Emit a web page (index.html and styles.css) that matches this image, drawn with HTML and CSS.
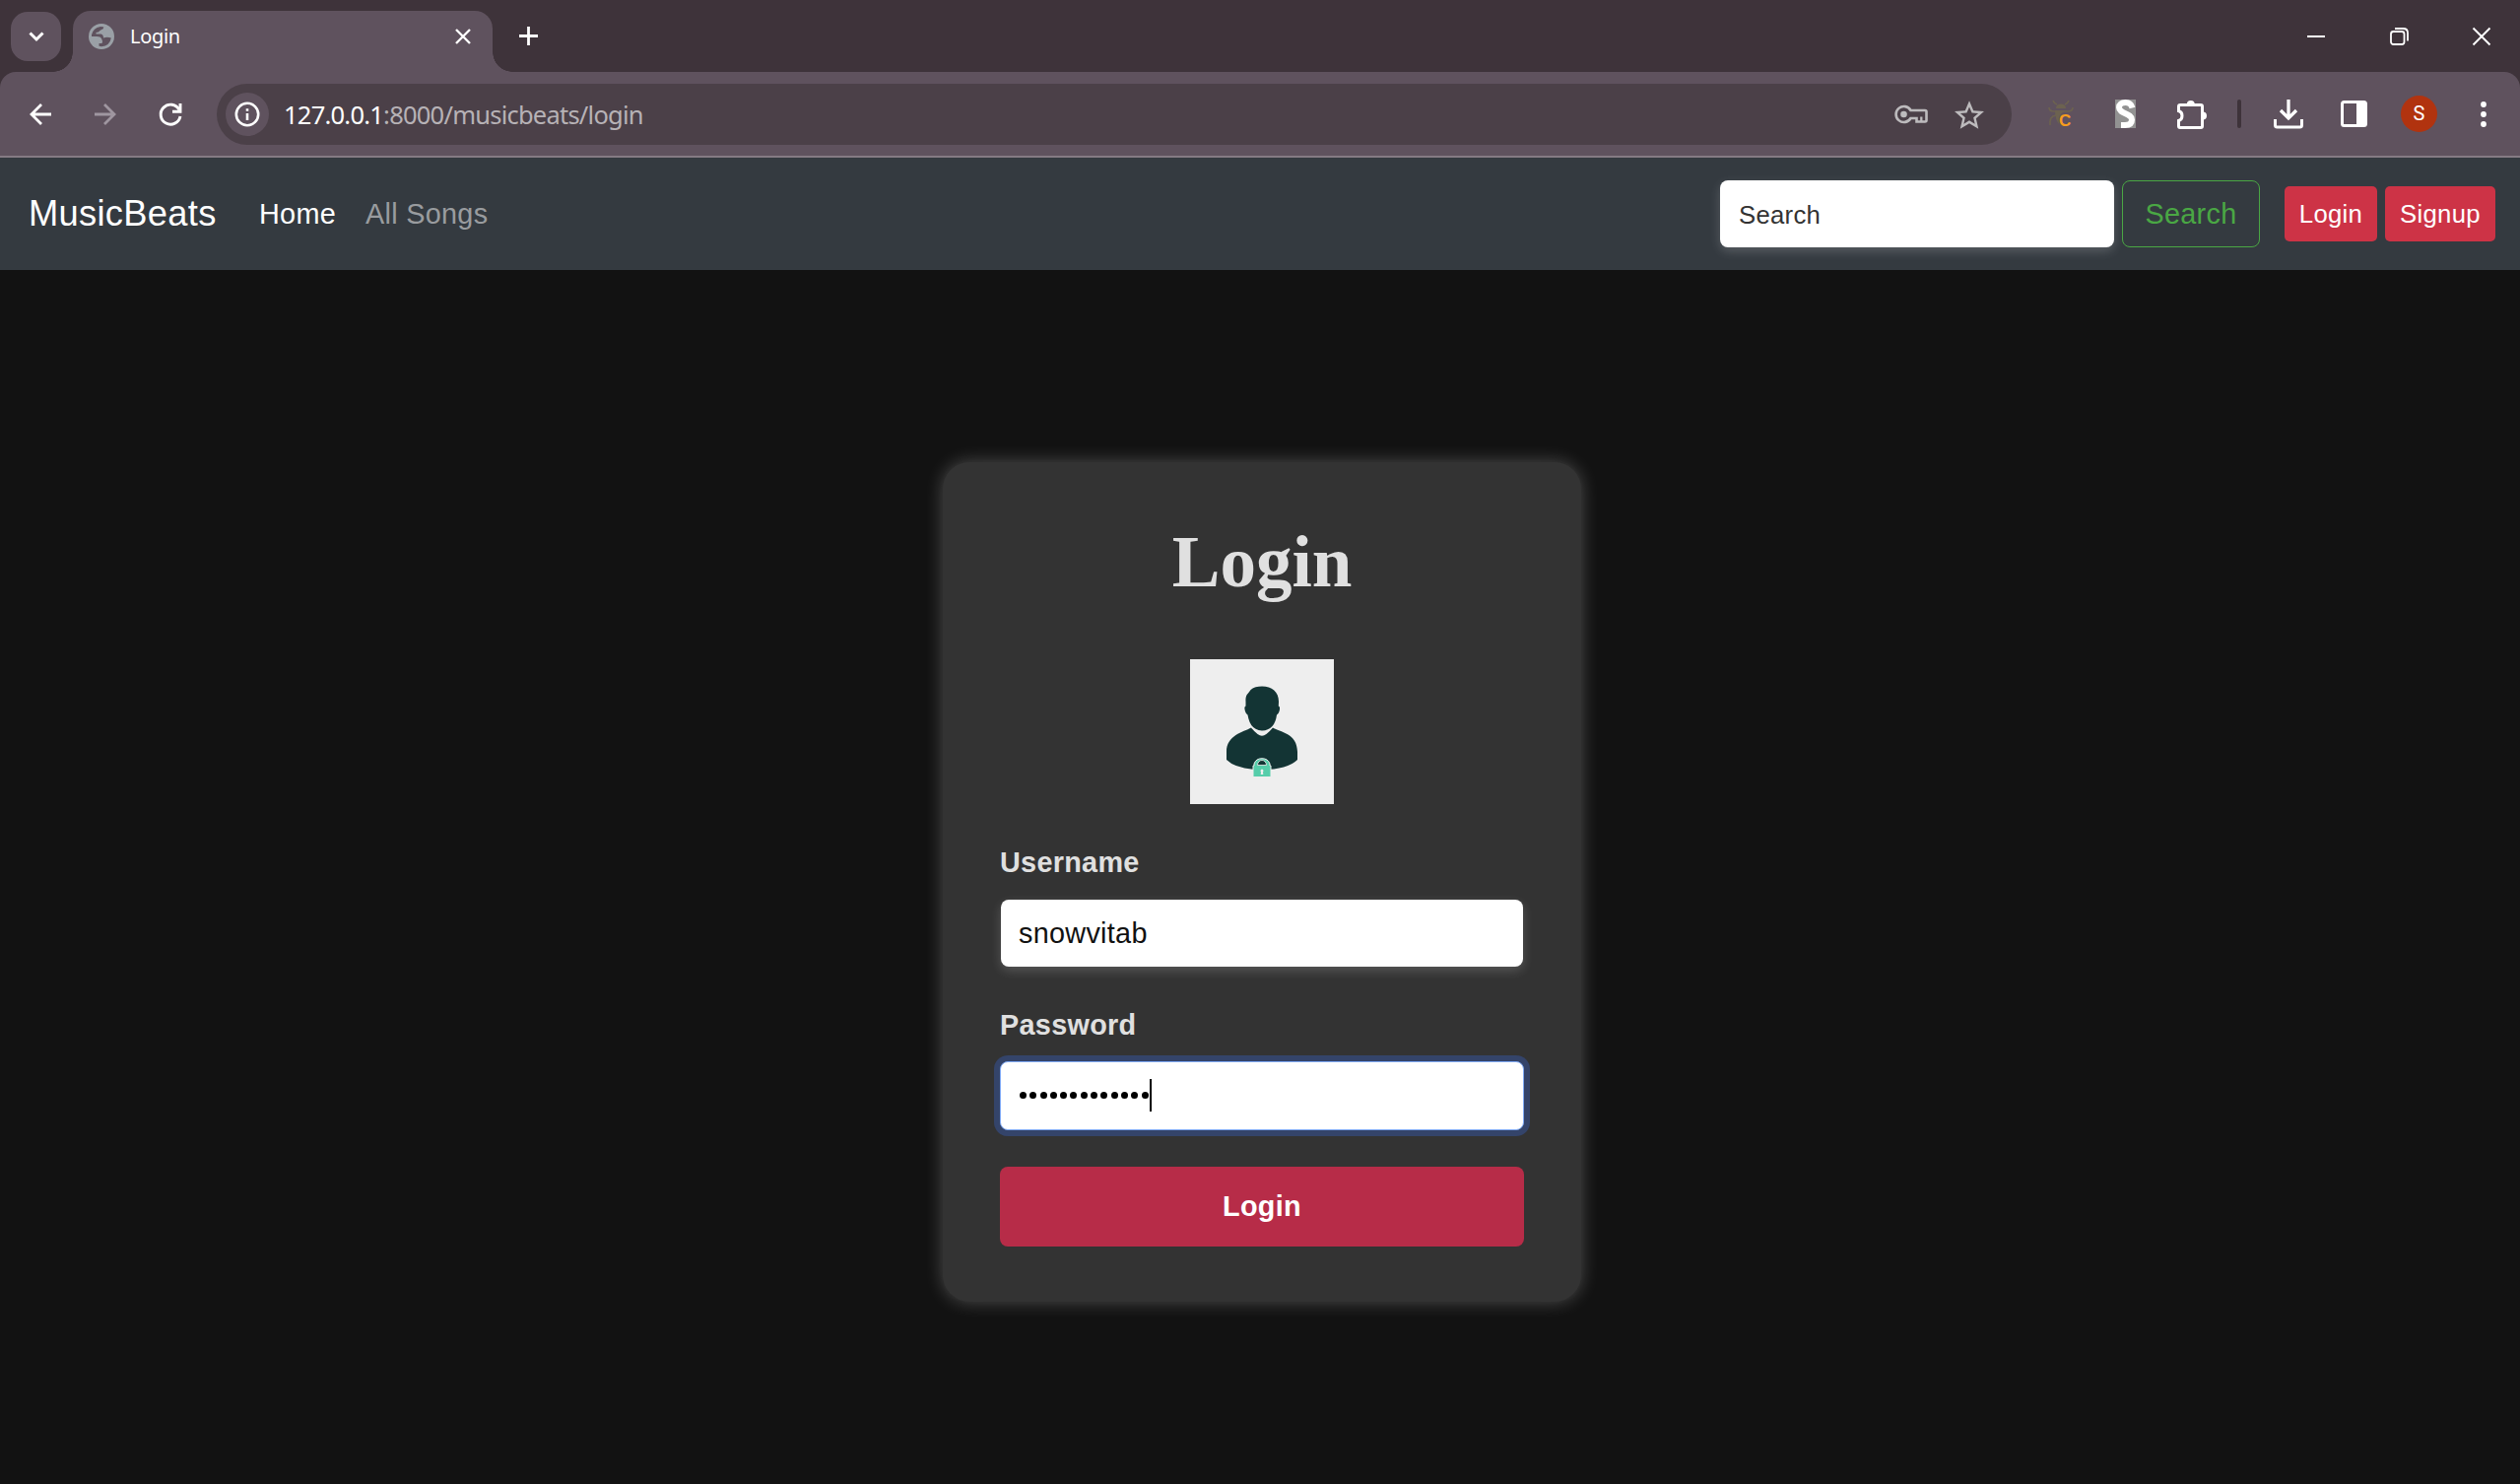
FILE: index.html
```
<!DOCTYPE html>
<html lang="en">
<head>
<meta charset="utf-8">
<title>Login</title>
<link rel="stylesheet" href="styles.css">
</head>
<body>
<div class="chrome">
<header class="titlebar">
  <button class="tab-search" aria-label="Search tabs"><svg width="16" height="11" viewBox="0 0 16 11"><path d="M1.5 1.5 8 8 14.5 1.5" fill="none" stroke="#fff" stroke-width="3"/></svg></button>
  <div class="tab">
    <svg class="globe" width="26" height="26" viewBox="0 0 26 26"><circle cx="13" cy="13" r="13" fill="#9aa0a6"/><path d="M3 11.200Q4.500 4.500 12 3L16.500 3.500Q14.500 4 14.500 6.500Q12.500 6 11.500 7Q10.500 9 7.500 9V10.500H12.500Q15 11 15 14.500Q19 13 22.800 14.500Q21.500 22.500 13 23.300L10.500 22.800V20H13.500Q14.500 17.500 13 15Q12 13 8.500 13H3Z" fill="#5f525e"/><path d="M15 3Q21.500 4 23 11.500Q22 13.500 19 13.200Q16 12.500 15.500 10Q12 8.500 13 6Q15.500 6 15 3Z" fill="#9aa0a6"/></svg>
    <span class="tab-title">Login</span>
    <svg class="tab-close" width="16" height="16" viewBox="0 0 16 16"><path d="M1 1 15 15M15 1 1 15" stroke="#fff" stroke-width="2.400"/></svg>
  </div>
  <svg class="new-tab" width="19" height="19" viewBox="0 0 19 19"><path d="M9.500 0V19M0 9.500H19" stroke="#fff" stroke-width="2.800"/></svg>
  <div class="window-controls">
    <svg width="18" height="18" viewBox="0 0 18 18"><path d="M0 9H18" stroke="#fff" stroke-width="2"/></svg>
    <svg width="19" height="18" viewBox="0 0 19 18"><rect x="1" y="4" width="13.500" height="13" rx="2.500" fill="none" stroke="#fff" stroke-width="1.800"/><path d="M5 1H13.500Q18 1 18 5.500V13.500" fill="none" stroke="#fff" stroke-width="1.800"/></svg>
    <svg width="18" height="18" viewBox="0 0 18 18"><path d="M.5.5 17.500 17.500M17.500.5.5 17.500" stroke="#fff" stroke-width="1.900"/></svg>
  </div>
</header>
<div class="toolbar">
  <div class="nav-icons">
    <svg width="22" height="22" viewBox="0 0 22 22"><path d="M22 11H2M12 1 2 11 12 21" fill="none" stroke="#fff" stroke-width="2.800"/></svg>
    <svg width="22" height="22" viewBox="0 0 22 22"><path d="M0 11H20M10 1 20 11 10 21" fill="none" stroke="#9f96a0" stroke-width="2.800"/></svg>
    <svg width="24" height="24" viewBox="0 0 24 24"><path d="M21 7.500A10 10 0 1 0 22 14" fill="none" stroke="#fff" stroke-width="2.900"/><path d="M22 1V9.200H14" fill="none" stroke="#fff" stroke-width="2.900"/></svg>
  </div>
  <div class="omnibox">
    <span class="site-info"><svg width="26" height="26" viewBox="0 0 26 26"><circle cx="13" cy="13" r="11.200" fill="none" stroke="#fff" stroke-width="2.600"/><path d="M13 12V19M13 7.200V9.800" stroke="#fff" stroke-width="2.600"/></svg></span>
    <span class="url"><b>127.0.0.1</b>:8000/musicbeats/login</span>
    <span class="omni-icons">
      <svg width="34" height="20" viewBox="0 0 34 20"><path d="M16.500 6A8 8 0 1 0 16.500 14H22.500V17.500H31Q32.500 17.500 32.500 16V7.500Q32.500 6 31 6Z" fill="none" stroke="#bdbbbd" stroke-width="2.600"/><circle cx="9.500" cy="10" r="3.300" fill="#bdbbbd"/><path d="M27.300 12.500V17" stroke="#bdbbbd" stroke-width="2.300"/></svg>
      <svg width="30" height="29" viewBox="2 2 20 19"><path fill="#bdbbbd" d="M22 9.240l-7.190-.62L12 2 9.190 8.630 2 9.240l5.460 4.730L5.820 21 12 17.270 18.180 21l-1.630-7.030L22 9.240zM12 15.400l-3.760 2.270 1-4.280-3.320-2.880 4.380-.38L12 6.100l1.710 4.040 4.380.38-3.320 2.880 1 4.280L12 15.400z"/></svg>
    </span>
  </div>
  <div class="extensions">
    <svg class="bug" width="26" height="29" viewBox="0 0 26 29"><path d="M8 9Q8 4.500 13 4.500T18 9ZM7 11H19L15 13Q9 17 11 25Q7 20 7 11Z" fill="#6c6250"/><path d="M5 1Q6 4 9 5M21 1Q20 4 17 5M1 8Q1 12 6 12H20Q25 12 25 8M8 16Q1 17 2 26" fill="none" stroke="#6c6250" stroke-width="1.700"/><text x="11" y="27" class="bug-letter">C</text></svg>
    <svg class="s-ext" width="21" height="29" viewBox="0 0 21 29"><path d="M0 0H21V29H0Z" fill="#929292"/><path d="M17.500 8.500C16.500 4.500 14 3 10.500 3C6.500 3 4 5 4 8C4 14.500 17 14 17 20.500C17 24.500 14 26 10 26H6" fill="none" stroke="#fff" stroke-width="6"/></svg>
    <svg class="puzzle" width="30" height="30" viewBox="0 0 30 30"><path d="M3 5.500H24Q25.500 5.500 25.500 7V27Q25.500 28.500 24 28.500H3Q1.500 28.500 1.500 27V21.500Q5 20.500 5 16.500T1.500 11.500V7Q1.500 5.500 3 5.500Z" fill="none" stroke="#fff" stroke-width="3"/><path d="M9.800 5A4 4 0 0 1 17.800 5ZM26 12.500A4 4 0 0 1 26 20.500Z" fill="#fff"/></svg>
    <i class="separator"></i>
    <svg class="download" width="30" height="30" viewBox="0 0 30 30"><path d="M15 0V19M7 11 15 19 23 11" fill="none" stroke="#fff" stroke-width="3.300"/><path d="M1.500 20V26Q1.500 28 3.500 28H26.500Q28.500 28 28.500 26V20" fill="none" stroke="#fff" stroke-width="3"/></svg>
    <svg class="panel" width="27" height="27" viewBox="0 0 27 27"><rect x="1.500" y="1.500" width="24" height="24" rx="2" fill="none" stroke="#fff" stroke-width="3"/><path d="M16 1H26V26H16Z" fill="#fff"/></svg>
    <span class="avatar">S</span>
    <svg class="menu" width="6" height="26" viewBox="0 0 6 26"><circle cx="3" cy="3" r="2.900" fill="#fff"/><circle cx="3" cy="13" r="2.900" fill="#fff"/><circle cx="3" cy="23" r="2.900" fill="#fff"/></svg>
  </div>
</div>
</div>
<nav class="navbar">
  <a class="brand">MusicBeats</a>
  <a class="nav-link active">Home</a>
  <a class="nav-link">All Songs</a>
  <form class="search-form">
    <span class="field search-field">Search</span>
    <span class="search-btn">Search</span>
    <span class="small-btn login-btn">Login</span>
    <span class="small-btn signup-btn">Signup</span>
  </form>
</nav>
<main class="page">
  <section class="card">
    <h1>Login</h1>
    <svg class="portrait" width="146" height="147" viewBox="0 0 146 147"><path d="M0 0H146V147H0Z" fill="#eee"/><path d="M61 69Q73 87 85 69L89 77 73 84 57 77Z" fill="#fff"/><path d="M73 27.500C83 27.500 90 33 90 43L89.800 47.500Q92 48 90.500 53Q89.500 56 88 56.500Q86 72 73 72.500Q61 72 58.500 56.500Q57 56 56 53Q54.500 48 56.500 47.500V43Q56 37 59 34.500Q62 27.500 73 27.500Z" fill="#133434"/><path d="M62 69.500Q69 77.800 73 77.800T84 69.500C91 74 109 75 109 94V102Q99 112 73 112Q47 112 37 102V94C37 77 54 74 62 69.500Z" fill="#133434"/><path d="M64 108V119.500H82V108H81V106A8.500 8 0 0 0 65 106V108Z" fill="#56cdaa" stroke="#eee" stroke-width="1"/><path d="M68.500 107.500A4.500 5 0 0 1 77.500 107.500Z" fill="#133434" stroke="#eee" stroke-width=".8"/><path d="M73 111.500A1.800 1.800 0 0 1 74 114.500L74.300 117H71.700L72 114.500A1.800 1.800 0 0 1 73 111.500Z" fill="#eee"/></svg>
    <label>Username</label>
    <div class="field">snowvitab</div>
    <label>Password</label>
    <div class="field focused"><span class="dots"><i></i><i></i><i></i><i></i><i></i><i></i><i></i><i></i><i></i><i></i><i></i><i></i><i></i></span><span class="caret"></span></div>
    <div class="submit">Login</div>
  </section>
</main>
</body>
</html>
```
FILE: styles.css
```
* { box-sizing: border-box; }
body { margin: 0; height: 1506px; display: flex; flex-direction: column; overflow: hidden; background: #121212; font: 28.8px/1.5 "Liberation Sans", Arial, sans-serif; letter-spacing: .3px; }
svg { display: block; flex: none; overflow: visible; }

.chrome { flex: none; background: #3e333a; }
.titlebar { height: 73px; display: flex; align-items: flex-start; padding-left: 11px; }
.tab-search { width: 51px; height: 50px; margin-top: 12px; padding: 0; border: 0; border-radius: 17px; background: #5f525e; display: grid; place-items: center; }
.tab { position: relative; width: 426px; height: 62px; margin: 11px 0 0 12px; padding: 0 22px 10px 16px; border-radius: 18px 18px 0 0; background: #5f525e; display: flex; align-items: center; }
.tab::before, .tab::after { content: ""; position: absolute; bottom: 0; width: 20px; height: 20px; }
.tab::before { left: -20px; background: radial-gradient(circle at 0 0, transparent 19.5px, #5f525e 20px); }
.tab::after { right: -20px; background: radial-gradient(circle at 100% 0, transparent 19.5px, #5f525e 20px); }
.tab-title { margin-left: 16px; color: #fff; font: 20px/26px "Noto Sans", "Open Sans", sans-serif; letter-spacing: -.3px; }
.tab-close { margin-left: auto; }
.new-tab { margin: 27px 0 0 27px; }
.window-controls { display: flex; gap: 65.5px; margin: 28px 30px 0 auto; }

.toolbar { height: 85px; display: flex; align-items: flex-start; border-radius: 16px 16px 0 0; background: #5f525e; }
.chrome { border-bottom: 2px solid #857b84; }
.nav-icons { display: flex; align-items: center; gap: 43.5px; width: 220px; height: 85px; padding: 1px 0 0 30px; }
.omnibox { width: 1822px; height: 62px; margin-top: 12px; padding: 0 28px 0 9px; border-radius: 31px; background: #4b4048; display: flex; align-items: center; }
.site-info { width: 44px; height: 44px; border-radius: 50%; background: #5f525e; display: grid; place-items: center; }
.url { margin-left: 15px; color: #b7b2b6; font: 25.5px/34px "Noto Sans", "Open Sans", sans-serif; letter-spacing: -.77px; }
.url b { color: #fff; font-weight: 400; }
.omni-icons { display: flex; align-items: center; gap: 27px; margin-left: auto; }
.extensions { display: flex; align-items: center; height: 85px; margin-left: 37px; }
.bug-letter { font: bold 17px "Liberation Sans", sans-serif; letter-spacing: 0; fill: #f79d1e; }
.s-ext { margin-left: 42px; }
.puzzle { margin-left: 42px; }
.separator { width: 4px; height: 29px; margin-left: 31px; border-radius: 2px; background: #3e333a; }
.download { margin-left: 33px; }
.panel { margin-left: 38px; }
.avatar { width: 37px; height: 37px; margin-left: 34px; border-radius: 50%; background: #b1330f; color: #fff; font: 20px/37px Roboto, sans-serif; text-align: center; }
.menu { margin-left: 44px; }

.navbar { height: 114px; flex: none; display: flex; align-items: center; padding: 0 25px 0 29px; background: #343a40; }
.brand { width: 234px; color: #fff; font-size: 36.3px; }
.nav-link { margin: 2px 30px 0 0; color: #999c9f; }
.nav-link.active { color: #fff; }
.search-form { display: flex; align-items: center; margin-left: auto; }
.field { display: flex; align-items: center; height: 68px; border-radius: 8px; background: #fff; color: #111; padding: 2px 18px 0; box-shadow: 0 4px 11px rgba(255,255,255,.18); }
.search-field { width: 400px; margin-right: 8px; padding-left: 19px; font-size: 25.7px; color: #333; }
.search-btn { width: 140px; height: 68px; margin-right: 25px; border: 1px solid #4aa744; border-radius: 8px; color: #4aa744; text-align: center; line-height: 67px; }
.small-btn { height: 56px; border-radius: 5px; background: #cd3346; color: #fff; font-size: 25.7px; line-height: 56px; text-align: center; }
.login-btn { width: 94px; margin-right: 8px; }
.signup-btn { width: 112px; }

.page { flex: 1; display: flex; justify-content: center; align-items: flex-start; padding: 195px 0 0 4px; }
.card { width: 648px; height: 852px; padding: 58px; border-radius: 27px; background: #333; box-shadow: 0 0 18px rgba(255,255,255,.25); }
h1 { margin: 0; height: 142px; color: #e0e0e0; font: bold 73px/87px "Liberation Serif", serif; letter-spacing: 0; text-align: center; }
.portrait { margin: 0 auto 36px; }
label { display: block; height: 61px; color: #e0e0e0; font-weight: bold; line-height: 46px; }
.card .field { margin: 0 1px 36px; }
.card .focused { height: 70px; margin: -1px 0 37px; padding: 0 18px 1px; border: 1px solid #80aaf5; box-shadow: 0 0 0 6px #34446a; }
.dots { display: flex; gap: 3.3px; margin-left: 1px; }
.dots i { width: 7px; height: 7px; border-radius: 50%; background: #000; }
.caret { width: 2px; height: 33px; margin-left: 1px; background: #000; }
.submit { height: 81px; border-radius: 8px; background: #b72c48; color: #fff; font-weight: bold; line-height: 80px; text-align: center; }
```
